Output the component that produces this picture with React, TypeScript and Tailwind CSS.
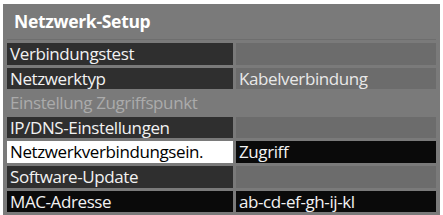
import React from 'react';

type Row = {
  label: string;
  value?: string;
  kind: 'normal' | 'disabled' | 'selected' | 'info';
};

const rows: Row[] = [
  { label: 'Verbindungstest', kind: 'normal' },
  { label: 'Netzwerktyp', value: 'Kabelverbindung', kind: 'normal' },
  { label: 'Einstellung Zugriffspunkt', kind: 'disabled' },
  { label: 'IP/DNS-Einstellungen', kind: 'normal' },
  { label: 'Netzwerkverbindungsein.', value: 'Zugriff', kind: 'selected' },
  { label: 'Software-Update', kind: 'normal' },
  { label: 'MAC-Adresse', value: 'ab-cd-ef-gh-ij-kl', kind: 'info' },
];

const leftClass = (kind: Row['kind']) => {
  if (kind === 'selected') return 'bg-white text-black';
  if (kind === 'info') return 'bg-[#0a0a0a] text-[#f2f2f2]';
  if (kind === 'disabled') return 'bg-[#7a7a7a] text-[#ababab]';
  return 'bg-[#2f2f2f] text-[#f2f2f2]';
};

const rightClass = (kind: Row['kind']) => {
  if (kind === 'selected' || kind === 'info') return 'bg-[#0a0a0a] text-[#f2f2f2]';
  if (kind === 'disabled') return 'bg-[#7a7a7a] text-[#f2f2f2]';
  return 'bg-[#6c6c6c] text-[#e8e8e8]';
};

export default function App() {
  return (
    <div className="w-[443px] h-[215px] bg-white pt-[4px] pl-[3px] pr-[3px] overflow-hidden font-['Open_Sans',sans-serif]">
      <div className="h-full bg-[#7a7a7a] px-[4px]">
        {/* header */}
        <div className="h-[36px] flex items-center pl-[7px] border-b border-[#6e6e6e]">
          <span className="text-white font-bold text-[17.5px] tracking-[-0.3px]">Netzwerk-Setup</span>
        </div>
        <div className="flex flex-col gap-[3px] pt-[3px]">
          {rows.map(row => (
            <div key={row.label} className="flex gap-[3px] h-[21.6px] text-[17px] leading-[21.6px] tracking-[-0.4px]">
              <div className={`w-[226px] pl-[3px] whitespace-nowrap ${leftClass(row.kind)}`}>
                {row.label}
              </div>
              <div className={`flex-1 pl-[3px] whitespace-nowrap ${rightClass(row.kind)}`}>
                {row.value}
              </div>
            </div>
          ))}
        </div>
      </div>
    </div>
  );
}
